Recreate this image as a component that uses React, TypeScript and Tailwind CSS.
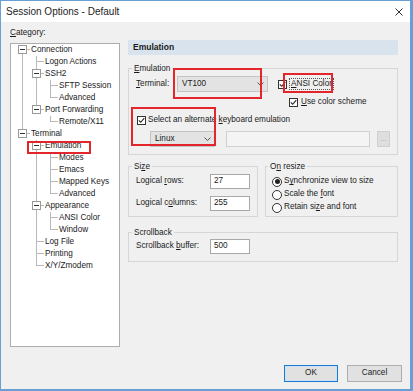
import React from "react";

type TreeNode = { label: string; children?: TreeNode[] };

type TreeRow = {
  label: string;
  depth: number;
  hasChildren: boolean;
  isLast: boolean;
  isFirst: boolean;
  guides: boolean[];
};

const categories: TreeNode[] = [
  {
    label: "Connection",
    children: [
      { label: "Logon Actions" },
      { label: "SSH2", children: [{ label: "SFTP Session" }, { label: "Advanced" }] },
      { label: "Port Forwarding", children: [{ label: "Remote/X11" }] },
    ],
  },
  {
    label: "Terminal",
    children: [
      {
        label: "Emulation",
        children: [{ label: "Modes" }, { label: "Emacs" }, { label: "Mapped Keys" }, { label: "Advanced" }],
      },
      { label: "Appearance", children: [{ label: "ANSI Color" }, { label: "Window" }] },
      { label: "Log File" },
      { label: "Printing" },
      { label: "X/Y/Zmodem" },
    ],
  },
];

// walk the tree into rows, remembering which ancestor lines keep going down
function flatten(nodes: TreeNode[], depth = 0, guides: boolean[] = [], out: TreeRow[] = []) {
  nodes.forEach((n, i) => {
    const isLast = i === nodes.length - 1;
    out.push({
      label: n.label,
      depth,
      hasChildren: !!n.children,
      isLast,
      isFirst: depth === 0 && i === 0,
      guides,
    });
    if (n.children) flatten(n.children, depth + 1, [...guides, !isLast], out);
  });
  return out;
}

const rows = flatten(categories);
const line = "border-[#b9b9b9]";

function TreeLine({ row }: { row: TreeRow }) {
  return (
    <div className="flex h-[12px] items-stretch">
      {row.guides.map((g, i) => (
        <div key={i} className="w-[14px] shrink-0">
          {g && <div className={`h-full w-[7px] border-r ${line}`} />}
        </div>
      ))}
      <div className="relative grid w-[14px] shrink-0 grid-cols-2 grid-rows-2">
        <div className={row.isFirst ? "" : `border-r ${line}`} />
        <div className={`border-b ${line}`} />
        <div className={row.isLast ? "" : `border-r ${line}`} />
        <div />
        {row.hasChildren && (
          <div className="absolute left-[2px] top-[1px] flex h-[9px] w-[9px] items-center justify-center border border-[#9a9a9a] bg-white">
            <div className="h-[1px] w-[5px] bg-[#333]" />
          </div>
        )}
      </div>
      <span className="whitespace-nowrap pl-[1px] leading-[12px]">{row.label}</span>
    </div>
  );
}

function Chevron() {
  return (
    <svg width="7" height="4" viewBox="0 0 7 4" className="shrink-0">
      <path d="M0.5 0.5 L3.5 3.5 L6.5 0.5" fill="none" stroke="#555" strokeWidth="1" />
    </svg>
  );
}

function Combo({ value, width }: { value: string; width: string }) {
  return (
    <div className={`flex h-[16px] ${width} items-center justify-between border border-[#c4c4c4] bg-[#e3e3e3] pl-[4px] pr-[3px]`}>
      <span>{value}</span>
      <Chevron />
    </div>
  );
}

function Checkbox() {
  return (
    <div className="h-[9px] w-[9px] shrink-0 border border-[#333] bg-white">
      <svg width="7" height="7" viewBox="0 0 7 7" className="block">
        <path d="M0.8 3.4 L2.7 5.3 L6.3 1.2" fill="none" stroke="#222" strokeWidth="1.1" />
      </svg>
    </div>
  );
}

function Radio({ checked }: { checked?: boolean }) {
  return (
    <div className="flex h-[10px] w-[10px] shrink-0 items-center justify-center rounded-full border border-[#333] bg-white">
      {checked && <div className="h-[5px] w-[5px] rounded-full bg-[#222]" />}
    </div>
  );
}

function TextBox({ value }: { value: string }) {
  return (
    <div className="flex h-[15px] w-[40px] items-center border border-[#a8a8a8] bg-white pl-[3px]">{value}</div>
  );
}

function Legend({ children }: { children: React.ReactNode }) {
  return <legend className="ml-[-4px] px-[2px] leading-[11px]">{children}</legend>;
}

const groupBox = "border border-[#d6d6d6]";

export default function App() {
  return (
    <div className="relative flex h-[391px] w-[413px] flex-col border border-r-[3px] border-b-[2px] border-[#6a9fd4] bg-[#f0f0f0] font-['Liberation_Sans',Arial,sans-serif] text-[8.2px] text-[#1a1a1a]">
      {/* title bar */}
      <div className="flex h-[21px] shrink-0 items-center justify-between bg-white pl-[5px] pr-[7px]">
        <span className="text-[10px] text-[#222]">Session Options - Default</span>
        <svg width="8" height="8" viewBox="0 0 8 8">
          <path d="M0.5 0.5 L7.5 7.5 M7.5 0.5 L0.5 7.5" stroke="#333" strokeWidth="1" />
        </svg>
      </div>

      <div className="flex pl-[9px]">
        {/* category tree */}
        <div className="flex w-[110px] shrink-0 flex-col pt-[5px]">
          <span className="leading-[11px]">
            <u>C</u>ategory:
          </span>
          <div className="mt-[5px] h-[304px] border border-[#adadad] bg-white pl-[5px]">
            {rows.map((r, i) => (
              <TreeLine key={i} row={r} />
            ))}
          </div>
        </div>

        {/* options page */}
        <div className="ml-[8px] mt-[18px] flex w-[270px] flex-col">
          <div className="flex h-[15px] items-center bg-[#d9e3ee] pl-[5px] text-[8.5px] font-bold">Emulation</div>

          <fieldset className={`${groupBox} mt-[8px] px-[7px] pb-[7px] pt-[2px]`}>
            <Legend>
              <u>E</u>mulation
            </Legend>
            <div className="flex h-[16px] items-center">
              <span className="w-[41px] shrink-0">
                <u>T</u>erminal:
              </span>
              <Combo value="VT100" width="w-[91px]" />
              <div className="ml-[10px]">
                <Checkbox />
              </div>
              <span className="ml-[2px] border border-dotted border-[#555] px-[1px] leading-[10px]">
                <u>A</u>NSI Color
              </span>
            </div>
            <div className="ml-[153px] mt-[5px] flex h-[10px] items-center">
              <Checkbox />
              <span className="ml-[3px]">
                <u>U</u>se color scheme
              </span>
            </div>
            <div className="ml-[1px] mt-[8px] flex h-[10px] items-center">
              <Checkbox />
              <span className="ml-[2px]">
                Select an alternate <u>k</u>eyboard emulation
              </span>
            </div>
            <div className="mt-[6px] flex h-[16px] items-center">
              <div className="ml-[14px]">
                <Combo value="Linux" width="w-[65px]" />
              </div>
              <div className="ml-[11px] h-[16px] w-[144px] border border-[#d0d0d0] bg-[#f4f4f4]" />
              <div className="ml-[7px] flex h-[16px] w-[13px] items-center justify-center border border-[#cfcfcf] bg-[#dedede] text-[7px] text-[#9a9a9a]">
                ...
              </div>
            </div>
          </fieldset>

          <div className="mt-[6px] flex gap-[7px]">
            <fieldset className={`${groupBox} w-[130px] px-[7px] pb-[5px] pt-[2px]`}>
              <Legend>
                Si<u>z</u>e
              </Legend>
              <div className="flex h-[15px] items-center">
                <span className="w-[74px] shrink-0">
                  Logical <u>r</u>ows:
                </span>
                <TextBox value="27" />
              </div>
              <div className="mt-[7px] flex h-[15px] items-center">
                <span className="w-[74px] shrink-0">
                  Logical c<u>o</u>lumns:
                </span>
                <TextBox value="255" />
              </div>
            </fieldset>

            <fieldset className={`${groupBox} w-[133px] pb-[2px] pl-[6px] pt-[3px]`}>
              <Legend>
                O<u>n</u> resize
              </Legend>
              {[
                { label: ["S", "y", "nchronize view to size"], checked: true },
                { label: ["Scale the ", "f", "ont"] },
                { label: ["Retain si", "z", "e and font"] },
              ].map((o, i) => (
                <div key={i} className="flex h-[13px] items-center">
                  <Radio checked={o.checked} />
                  <span className="ml-[2px] whitespace-nowrap">
                    {o.label[0]}
                    <u>{o.label[1]}</u>
                    {o.label[2]}
                  </span>
                </div>
              ))}
            </fieldset>
          </div>

          <fieldset className={`${groupBox} mt-[10px] px-[7px] pb-[7px] pt-[1px]`}>
            <Legend>Scrollback</Legend>
            <div className="flex h-[15px] items-center">
              <span className="w-[74px] shrink-0">
                Scrollback <u>b</u>uffer:
              </span>
              <TextBox value="500" />
            </div>
          </fieldset>
        </div>
      </div>

      {/* dialog buttons */}
      <div className="mt-[18px] flex justify-end gap-[9px] pr-[8px]">
        <button className="h-[17px] w-[54px] border border-[#1979d4] bg-[#e1e1e1] shadow-[inset_0_0_0_1px_#cfe3f7]">OK</button>
        <button className="h-[17px] w-[55px] border border-[#adadad] bg-[#e1e1e1]">Cancel</button>
      </div>

      {/* red annotation boxes drawn over the dialog */}
      <div className="absolute left-[26px] top-[140px] h-[13px] w-[64px] border-2 border-[#e3262c]" />
      <div className="absolute left-[172px] top-[67px] h-[31px] w-[89px] border-2 border-[#e3262c]" />
      <div className="absolute left-[282px] top-[72px] h-[20px] w-[50px] border-2 border-[#e3262c]" />
      <div className="absolute left-[130px] top-[106px] h-[39px] w-[85px] border-2 border-[#e3262c]" />
    </div>
  );
}
